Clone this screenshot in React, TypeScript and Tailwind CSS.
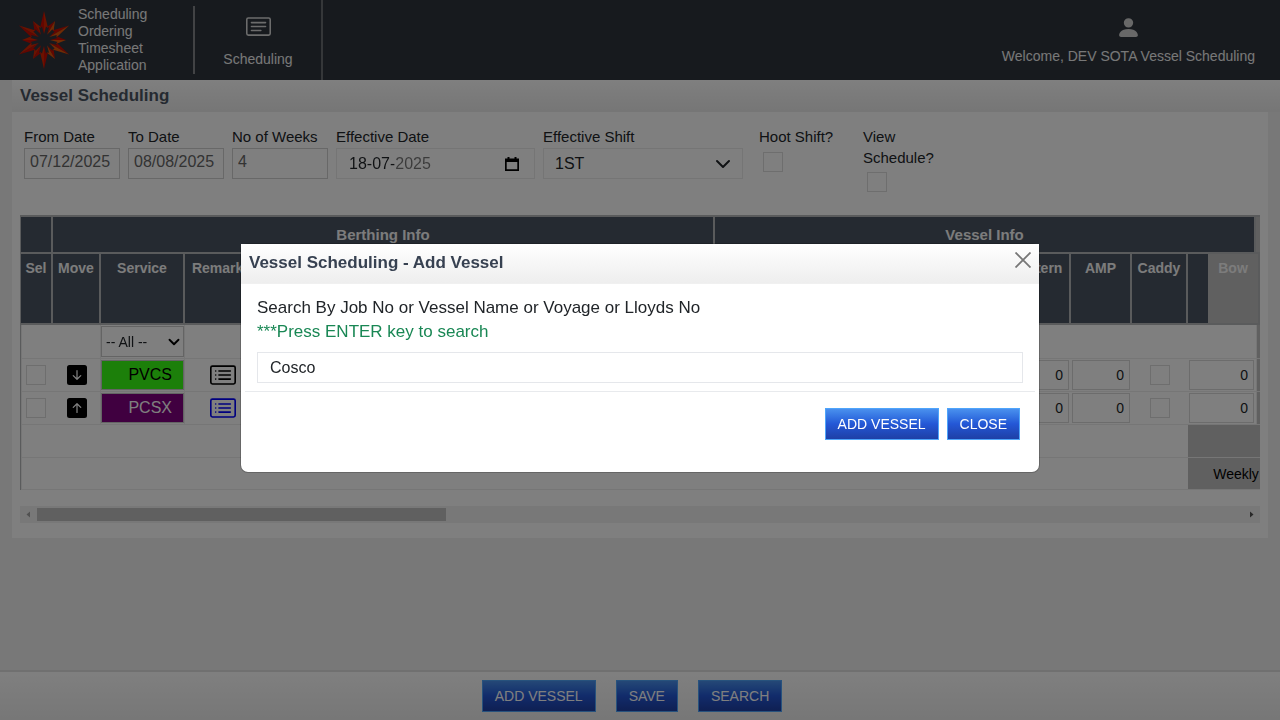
import React from 'react';
import {
  BsArrowDownSquareFill,
  BsArrowUpSquareFill,
  BsCardList,
  BsCardText,
  BsPersonFill,
} from 'react-icons/bs';

function Logo() {
  const angles = [0, 30, 60, 90, 120, 150, 180, 210, 240, 270, 300, 330];
  return (
    <svg className="h-15 w-14 shrink-0" viewBox="-28 -30 56 60" aria-hidden="true">
      {angles.map((a, i) => {
        const tip = i % 2 === 0 ? -29 : -22;
        return (
          <g key={a} transform={`rotate(${a})`}>
            <path d={`M0 ${tip} L-4 -12 L-2 -13.5 L0 -6 Z`} fill="#c80c00" />
            <path d={`M0 ${tip} L4 -12 L2 -13.5 L0 -6 Z`} fill={i > 0 && i < 6 ? '#e05408' : '#d62400'} />
          </g>
        );
      })}
    </svg>
  );
}

function Chevron({ className }: { className: string }) {
  return (
    <svg className={className} viewBox="0 0 16 16" fill="none" stroke="currentColor" strokeLinecap="round" strokeLinejoin="round" aria-hidden="true">
      <path d="m2 5 6 6 6-6" />
    </svg>
  );
}

function Button({ children }: { children: React.ReactNode }) {
  return (
    <button
      type="button"
      className="h-8 border border-[#4ea5fb] bg-linear-to-b from-[#4a90ee] via-[#2457d6] to-[#1e40a6] px-3 text-sm text-white"
    >
      {children}
    </button>
  );
}

function Check({ label, id }: { label: string; id?: string }) {
  return (
    <input
      type="checkbox"
      id={id}
      aria-label={id ? undefined : label}
      className="block size-5 shrink-0 appearance-none border border-[#dcdcdc]"
    />
  );
}

function TextField({ id, label, value }: { id: string; label: string; value: string }) {
  return (
    <div className="w-24">
      <label htmlFor={id} className="block">{label}</label>
      <input
        id={id}
        defaultValue={value}
        className="block h-[31px] w-full border border-[#d0d0d0] px-[5px] pb-1 text-base text-[#666]"
      />
    </div>
  );
}

function Filters() {
  return (
    <div className="flex min-h-[95px] gap-2 pt-[6px] pl-1 text-[15px] leading-[22px] text-[#212529]">
      <TextField id="from" label="From Date" value="07/12/2025" />
      <TextField id="to" label="To Date" value="08/08/2025" />
      <TextField id="weeks" label="No of Weeks" value="4" />
      <div className="w-[199px]">
        <label htmlFor="eff-date" className="block">Effective Date</label>
        <div className="flex h-[31px] items-center border border-[#eaeaea] pr-[14px]">
          <input
            id="eff-date"
            defaultValue="18-07-2025"
            className="h-full w-0 flex-1 bg-[linear-gradient(90deg,#212529_57px,#777_57px)] bg-clip-text pl-3 text-base text-transparent"
          />
          <button type="button" aria-label="Choose date" className="text-black">
            <svg className="size-4" viewBox="0 0 16 16" aria-hidden="true">
              <path d="M3.5 1h2v1.5h5V1h2v1.5H15V15H1V2.500h2.500z M2.700 6v7.300h10.600V6z" fill="currentColor" fillRule="evenodd" />
            </svg>
          </button>
        </div>
      </div>
      <div className="w-[200px]">
        <label htmlFor="shift" className="block">Effective Shift</label>
        <div className="relative">
          <select id="shift" className="block h-[31px] w-full appearance-none border border-[#eaeaea] pl-[11px] text-base text-[#212529]">
            <option>1ST</option>
          </select>
          <Chevron className="pointer-events-none absolute top-2 right-3 size-4 stroke-2" />
        </div>
      </div>
      <div className="w-24 pl-2">
        <label htmlFor="hoot" className="block whitespace-nowrap">Hoot Shift?</label>
        <div className="pt-1 pl-1"><Check id="hoot" label="Hoot Shift?" /></div>
      </div>
      <div className="w-24 pl-2 leading-[21px]">
        <label htmlFor="view" className="block">View Schedule?</label>
        <div className="pt-1 pl-1"><Check id="view" label="View Schedule?" /></div>
      </div>
    </div>
  );
}

const head = 'border-r-2 border-b-2 border-[#b4b6b9] bg-[#4b5563] p-0 text-[#f8f8f8] font-bold';
const cell = 'border-b border-[#ececec] p-0';

function NumberCell({ label }: { label: string }) {
  return (
    <td className={cell}>
      <div className="pr-[2px] pl-[1px]">
        <input aria-label={label} defaultValue="0" className="block h-[30px] w-full border border-[#d8d8d8] pr-[5px] text-right text-sm text-[#212529]" />
      </div>
    </td>
  );
}

function VesselRow({ service, color, up }: { service: string; color: string; up?: boolean }) {
  return (
    <tr className="h-[33px]">
      <td className={`${cell} border-l`}><div className="pl-1"><Check label={`Select ${service}`} /></div></td>
      <td className={`${cell} border-r`}>
        <button type="button" aria-label={up ? 'Move up' : 'Move down'} className="mx-auto block text-black">
          {up ? <BsArrowUpSquareFill size={20} /> : <BsArrowDownSquareFill size={20} />}
        </button>
      </td>
      <td className={`${cell} border-r`}>
        <input aria-label="Service" defaultValue={service} className={`block h-[30px] w-[83px] border border-[#c8c8c8] pr-[11px] text-right text-base ${color}`} />
      </td>
      <td className={cell}>
        <button type="button" aria-label={`Remarks ${service}`} className={up ? 'mx-auto block text-[#0000ff]' : 'mx-auto block text-black'}>
          <BsCardList size={26} />
        </button>
      </td>
      <td className={cell} />
      <td className={cell} />
      <NumberCell label="Stern" />
      <NumberCell label="AMP" />
      <td className={cell}><div className="flex justify-center"><Check label={`Caddy ${service}`} /></div></td>
      <NumberCell label="Bri" />
      <td className={`${cell} border-l bg-[#c0c0c0]`} />
    </tr>
  );
}

function Schedule() {
  const names = ['Sel', 'Move', 'Service', 'Remarks', '', '', 'Stern', 'AMP', 'Caddy', 'Bri'];
  return (
    <div className="overflow-hidden">
      <table className="w-[1288px] table-fixed border-separate border-spacing-0 border-t-2 border-l border-[#b4b6b9] text-sm">
        <colgroup>
          <col className="w-8" />
          <col className="w-12" />
          <col className="w-21" />
          <col className="w-[75px]" />
          <col className="w-[455px]" />
          <col className="w-[305px]" />
          <col className="w-[51px]" />
          <col className="w-[61px]" />
          <col className="w-14" />
          <col className="w-[68px]" />
          <col className="w-[52px]" />
        </colgroup>
        <thead>
          <tr className="h-[37px] text-[15px]">
            <th className={head} />
            <th colSpan={4} className={head}>Berthing Info</th>
            <th colSpan={5} className={head}>Vessel Info</th>
            <th className="border-b-2 border-[#b4b6b9] bg-[#c0c0c0]" />
          </tr>
          <tr className="h-[71px] align-top">
            {names.map((n, i) => (
              <th key={i} className={head}><div className="pt-1 leading-5">{n}</div></th>
            ))}
            <th className="sticky right-0 border-r-2 border-b-2 border-[#b4b6b9] bg-[#c0c0c0] p-0 font-bold text-[#f8f8f8]">
              <div className="pt-1 leading-5">Bow</div>
            </th>
          </tr>
        </thead>
        <tbody>
          <tr className="h-[34px]">
            <td className={`${cell} border-l`} />
            <td className={`${cell} border-r`} />
            <td className={`${cell} border-r`}>
              <div className="relative w-[83px]">
                <select aria-label="Service filter" className="block h-[31px] w-full appearance-none border border-[#c8c8c8] pl-1 text-sm text-[#212529]">
                  <option>-- All --</option>
                </select>
                <Chevron className="pointer-events-none absolute top-2.5 right-1 size-3 stroke-[2.5]" />
              </div>
            </td>
            <td colSpan={7} className={cell} />
            <td className={`${cell} border-l bg-[#c0c0c0]`} />
          </tr>
          <VesselRow service="PVCS" color="bg-[#39ff14] text-black" />
          <VesselRow service="PCSX" color="bg-[#800080] text-white" up />
          <tr className="h-[33px]">
            <td colSpan={9} className={`${cell} border-l`} />
            <td colSpan={2} className={`${cell} bg-[#c0c0c0] text-right text-black`}><div className="pr-4">Total</div></td>
          </tr>
          <tr className="h-8">
            <td colSpan={9} className={`${cell} border-l`} />
            <td colSpan={2} className={`${cell} bg-[#c0c0c0] text-right text-black`}><div className="pr-4">Weekly Total</div></td>
          </tr>
        </tbody>
      </table>
    </div>
  );
}

function ScrollTrack() {
  return (
    <div className="mt-4 flex h-[17px] items-center bg-[#f1f1f1]">
      <svg className="size-[17px]" viewBox="0 0 17 17" aria-hidden="true"><path d="M10 5.500v6l-3.500-3z" fill="#a3a3a3" /></svg>
      <div className="flex-1">
        <div className="h-[13px] w-[409px] bg-[#c1c1c1]" />
      </div>
      <svg className="size-[17px]" viewBox="0 0 17 17" aria-hidden="true"><path d="M7 5.500v6l3.500-3z" fill="#505050" /></svg>
    </div>
  );
}

function Dialog() {
  return (
    <div className="fixed inset-0 z-10 flex items-center justify-center bg-black/50 pb-1">
      <div role="dialog" aria-modal="true" aria-labelledby="dialog-title" className="w-[800px] rounded-lg border border-black/20 bg-white bg-clip-padding">
        <div className="flex h-10 justify-between border-b border-[#f0f0f0] bg-linear-to-b from-white to-[#eeeeee] px-2 text-[#374151]">
          <h2 id="dialog-title" className="text-[17px] leading-[38px] font-bold">Vessel Scheduling - Add Vessel</h2>
          <button type="button" aria-label="Close dialog" className="self-start pt-2">
            <svg className="size-4" viewBox="0 0 16 16" stroke="#777" strokeWidth="1.8" aria-hidden="true">
              <path d="M.5.500l15 15M15.500.500l-15 15" />
            </svg>
          </button>
        </div>
        <div className="px-4 pt-3 pb-2 text-[17px] leading-6 text-[#212529]">
          <label htmlFor="query" className="block">Search By Job No or Vessel Name or Voyage or Lloyds No</label>
          <p className="text-[#198754]">***Press ENTER key to search</p>
          <input id="query" defaultValue="Cosco" className="mt-2 block h-[31px] w-full border border-[#e5e7eb] px-3 text-base" />
        </div>
        <div className="mx-1 flex justify-end gap-2 border-t border-[#e8eaed] px-[15px] pt-4 pb-8">
          <Button>ADD VESSEL</Button>
          <Button>CLOSE</Button>
        </div>
      </div>
    </div>
  );
}

export default function App() {
  return (
    <div className="flex min-h-screen flex-col bg-[#f0f0f0] font-['Liberation_Sans',Arial,sans-serif]">
      <header className="flex h-20 items-center bg-[#2e343d] text-sm text-[#f0f0f0]">
        <div className="flex h-[68px] w-[195px] items-center border-r-2 border-[#85878b] pl-4 leading-[17px]">
          <Logo />
          <div className="pl-1.5">Scheduling<br />Ordering<br />Timesheet<br />Application</div>
        </div>
        <a href="#scheduling" className="flex h-20 w-32 flex-col items-center border-r-2 border-[#6b6e73] pt-3.5">
          <BsCardText size={25} className="text-[#d8d8d8]" />
          <span className="pt-2.5 leading-5">Scheduling</span>
        </a>
        <div className="ml-auto flex flex-col items-center pr-[25px]">
          <BsPersonFill size={25} className="text-[#d0d0d0]" />
          <span className="pt-1.5 leading-5">Welcome, DEV SOTA Vessel Scheduling</span>
        </div>
      </header>
      <main className="pl-3">
        <h1 className="h-8 bg-linear-to-b from-white to-[#ececec] pl-2 text-[17px] leading-8 font-bold text-[#4b5563]">Vessel Scheduling</h1>
        <section className="mr-3 bg-white p-2 pb-[15px]">
          <Filters />
          <Schedule />
          <ScrollTrack />
        </section>
      </main>
      <footer className="mt-auto flex h-[50px] items-center justify-center gap-5 border-t-2 border-[#e0e0e0] bg-linear-to-b from-white to-[#eeeeee] pr-4 pb-0">
        <Button>ADD VESSEL</Button>
        <Button>SAVE</Button>
        <Button>SEARCH</Button>
      </footer>
      <Dialog />
    </div>
  );
}
